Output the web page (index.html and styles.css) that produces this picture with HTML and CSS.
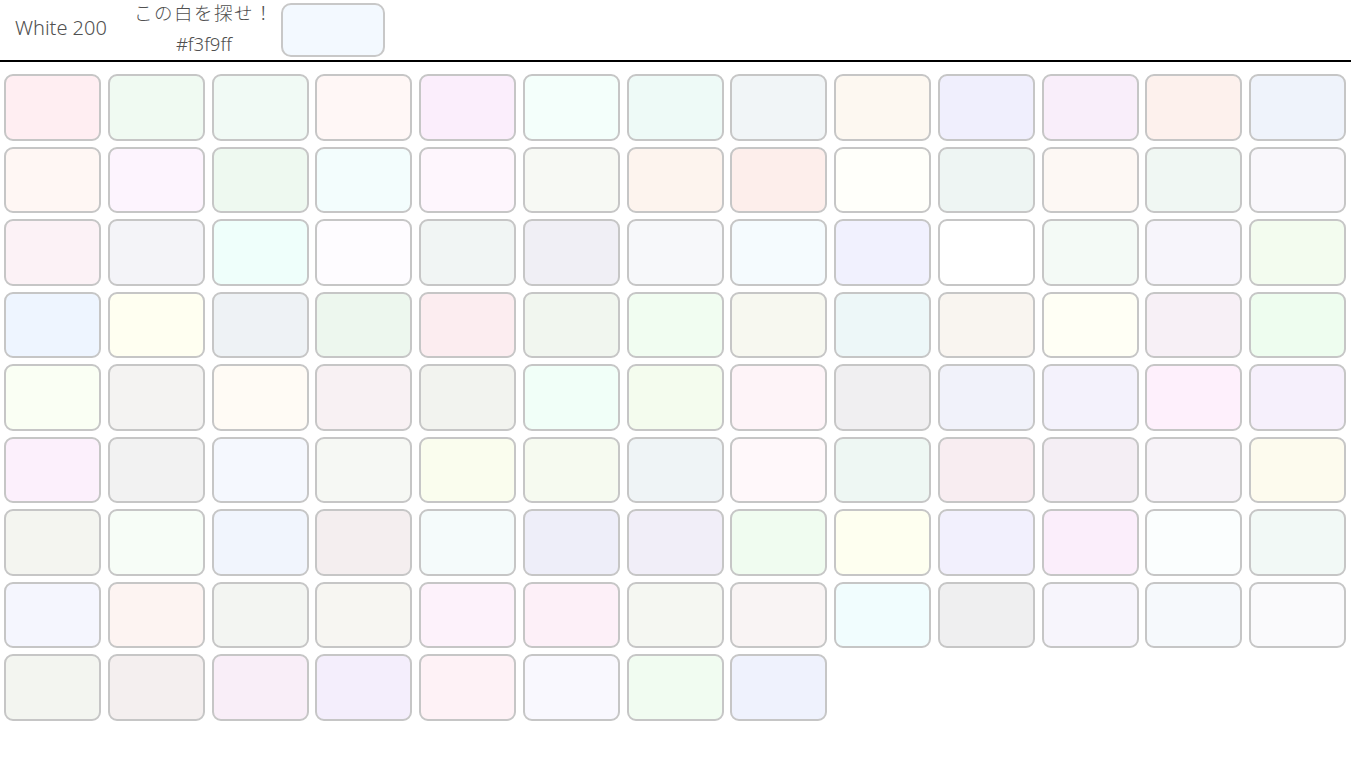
FILE: index.html
```html
<!DOCTYPE html>
<html lang="ja">
<head>
<meta charset="utf-8">
<title>White 200</title>
<link rel="stylesheet" href="styles.css">
</head>
<body>
<header class="bar">
  <div class="level">White 200</div>
  <div class="prompt">
    <div class="prompt-line prompt-ja">この白を探せ！</div>
    <div class="prompt-line">#f3f9ff</div>
  </div>
  <div class="target" style="background:#f3f9ff"></div>
</header>
<main class="grid">
  <div class="tile" style="background:#ffeef2"></div>
  <div class="tile" style="background:#f0faf2"></div>
  <div class="tile" style="background:#f1faf5"></div>
  <div class="tile" style="background:#fff7f6"></div>
  <div class="tile" style="background:#fbeefc"></div>
  <div class="tile" style="background:#f4fffb"></div>
  <div class="tile" style="background:#eefaf7"></div>
  <div class="tile" style="background:#f1f5f7"></div>
  <div class="tile" style="background:#fdf8f1"></div>
  <div class="tile" style="background:#f0effd"></div>
  <div class="tile" style="background:#f9eefa"></div>
  <div class="tile" style="background:#fdf1ed"></div>
  <div class="tile" style="background:#eff3fb"></div>

  <div class="tile" style="background:#fff7f4"></div>
  <div class="tile" style="background:#fdf4fe"></div>
  <div class="tile" style="background:#eef9f0"></div>
  <div class="tile" style="background:#f3fdfd"></div>
  <div class="tile" style="background:#fef6fd"></div>
  <div class="tile" style="background:#f7f9f4"></div>
  <div class="tile" style="background:#fdf4ee"></div>
  <div class="tile" style="background:#fdeeeb"></div>
  <div class="tile" style="background:#fffffa"></div>
  <div class="tile" style="background:#eef5f3"></div>
  <div class="tile" style="background:#fdf8f4"></div>
  <div class="tile" style="background:#f0f7f3"></div>
  <div class="tile" style="background:#f9f7fb"></div>

  <div class="tile" style="background:#fcf2f6"></div>
  <div class="tile" style="background:#f4f4f8"></div>
  <div class="tile" style="background:#effffb"></div>
  <div class="tile" style="background:#fefcff"></div>
  <div class="tile" style="background:#f1f5f4"></div>
  <div class="tile" style="background:#f0eff5"></div>
  <div class="tile" style="background:#f7f8fa"></div>
  <div class="tile" style="background:#f5fbfe"></div>
  <div class="tile" style="background:#f1f1fe"></div>
  <div class="tile" style="background:#ffffff"></div>
  <div class="tile" style="background:#f4faf6"></div>
  <div class="tile" style="background:#f7f5fb"></div>
  <div class="tile" style="background:#f3fcef"></div>

  <div class="tile" style="background:#eef5ff"></div>
  <div class="tile" style="background:#fffff1"></div>
  <div class="tile" style="background:#eef2f5"></div>
  <div class="tile" style="background:#edf7ee"></div>
  <div class="tile" style="background:#fcedf0"></div>
  <div class="tile" style="background:#f1f6ef"></div>
  <div class="tile" style="background:#f1fdf1"></div>
  <div class="tile" style="background:#f7f8f0"></div>
  <div class="tile" style="background:#edf7f8"></div>
  <div class="tile" style="background:#f9f5f0"></div>
  <div class="tile" style="background:#fffff5"></div>
  <div class="tile" style="background:#f7f0f6"></div>
  <div class="tile" style="background:#eefdef"></div>

  <div class="tile" style="background:#fafff4"></div>
  <div class="tile" style="background:#f4f3f2"></div>
  <div class="tile" style="background:#fffbf5"></div>
  <div class="tile" style="background:#f8f1f3"></div>
  <div class="tile" style="background:#f2f3ef"></div>
  <div class="tile" style="background:#f1fff8"></div>
  <div class="tile" style="background:#f4fcee"></div>
  <div class="tile" style="background:#fef4f8"></div>
  <div class="tile" style="background:#f0eff1"></div>
  <div class="tile" style="background:#f1f2fa"></div>
  <div class="tile" style="background:#f4f2fc"></div>
  <div class="tile" style="background:#fef0fc"></div>
  <div class="tile" style="background:#f6f0fc"></div>

  <div class="tile" style="background:#fcf0fc"></div>
  <div class="tile" style="background:#f2f2f2"></div>
  <div class="tile" style="background:#f5f8fe"></div>
  <div class="tile" style="background:#f6f8f4"></div>
  <div class="tile" style="background:#fafdee"></div>
  <div class="tile" style="background:#f6faf0"></div>
  <div class="tile" style="background:#eff4f6"></div>
  <div class="tile" style="background:#fff8fa"></div>
  <div class="tile" style="background:#eef7f3"></div>
  <div class="tile" style="background:#f8edf1"></div>
  <div class="tile" style="background:#f4eef4"></div>
  <div class="tile" style="background:#f7f3f8"></div>
  <div class="tile" style="background:#fdfbee"></div>

  <div class="tile" style="background:#f4f5f0"></div>
  <div class="tile" style="background:#f7fdf7"></div>
  <div class="tile" style="background:#f1f5fd"></div>
  <div class="tile" style="background:#f4eeef"></div>
  <div class="tile" style="background:#f5fbfb"></div>
  <div class="tile" style="background:#eeeef9"></div>
  <div class="tile" style="background:#f1eef8"></div>
  <div class="tile" style="background:#f0fcf0"></div>
  <div class="tile" style="background:#fefff0"></div>
  <div class="tile" style="background:#f2f0fd"></div>
  <div class="tile" style="background:#fbeefb"></div>
  <div class="tile" style="background:#fbfefe"></div>
  <div class="tile" style="background:#f2f9f6"></div>

  <div class="tile" style="background:#f5f6fe"></div>
  <div class="tile" style="background:#fdf4f2"></div>
  <div class="tile" style="background:#f3f5f2"></div>
  <div class="tile" style="background:#f7f6f2"></div>
  <div class="tile" style="background:#fdf2fb"></div>
  <div class="tile" style="background:#fdf0f8"></div>
  <div class="tile" style="background:#f5f7f2"></div>
  <div class="tile" style="background:#f9f4f4"></div>
  <div class="tile" style="background:#f1fdfe"></div>
  <div class="tile" style="background:#efeff0"></div>
  <div class="tile" style="background:#f7f5fc"></div>
  <div class="tile" style="background:#f6f9fc"></div>
  <div class="tile" style="background:#fafafc"></div>

  <div class="tile" style="background:#f3f5f0"></div>
  <div class="tile" style="background:#f4efef"></div>
  <div class="tile" style="background:#f9eef8"></div>
  <div class="tile" style="background:#f4eefc"></div>
  <div class="tile" style="background:#fef2f6"></div>
  <div class="tile" style="background:#f9f8fe"></div>
  <div class="tile" style="background:#f1fcf1"></div>
  <div class="tile" style="background:#eff2fd"></div>
</main>
</body>
</html>
```
FILE: styles.css
```css
html, body {
  margin: 0;
  padding: 0;
  background: #ffffff;
}

body {
  font-family: "Noto Sans", "Noto Sans CJK JP", sans-serif;
  color: #505050;
}

.bar {
  display: flex;
  align-items: center;
  height: 60px;
  border-bottom: 2px solid #000000;
}

.level {
  margin-left: 15px;
  margin-bottom: 5px;
  font-size: 20px;
  font-weight: 300;
}

.prompt {
  margin-left: 27px;
  margin-bottom: 2px;
  width: 140px;
  text-align: center;
}

.prompt-line {
  font-size: 18.5px;
  font-weight: 300;
  line-height: 31px;
  white-space: nowrap;
}

.prompt-ja {
  font-family: "Noto Sans CJK JP", sans-serif;
  font-size: 18.5px;
  letter-spacing: 1.5px;
  margin-top: -3px;
}

.target {
  margin-left: 7px;
  width: 100px;
  height: 50px;
  border: 2px solid #c8c8c8;
  border-radius: 10px;
}

.grid {
  display: grid;
  grid-template-columns: repeat(13, 1fr);
  column-gap: 6.75px;
  row-gap: 6px;
  padding: 0 5px 0 4px;
  margin-top: 12px;
}

.tile {
  height: 62.5px;
  border: 2px solid #c6c6c6;
  border-radius: 9px;
}
```
